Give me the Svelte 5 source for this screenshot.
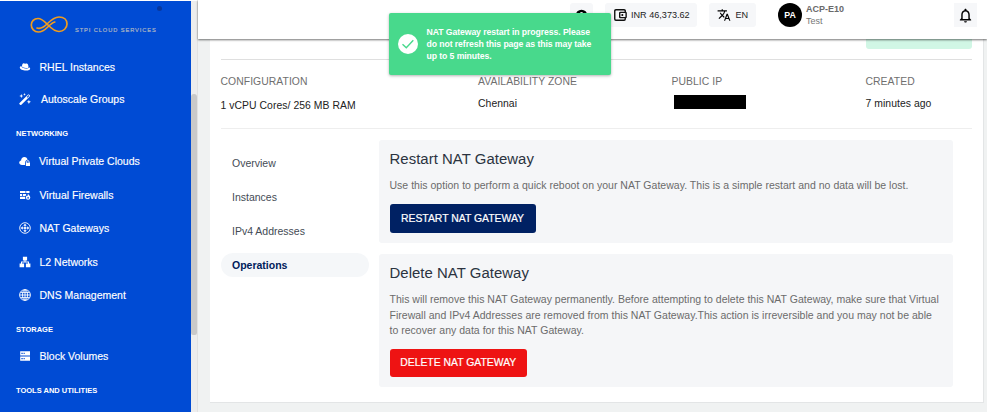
<script>
  const groups = [
    { title: '', items: [
      { label: 'RHEL Instances', icon: 'hat' },
      { label: 'Autoscale Groups', icon: 'wand' }
    ] },
    { title: 'NETWORKING', items: [
      { label: 'Virtual Private Clouds', icon: 'cloud' },
      { label: 'Virtual Firewalls', icon: 'wall' },
      { label: 'NAT Gateways', icon: 'nat' },
      { label: 'L2 Networks', icon: 'lan' },
      { label: 'DNS Management', icon: 'globe' }
    ] },
    { title: 'STORAGE', items: [{ label: 'Block Volumes', icon: 'disk' }] },
    { title: 'TOOLS AND UTILITIES', items: [] }
  ];
  const tabs = ['Overview', 'Instances', 'IPv4 Addresses', 'Operations'];
</script>

{#snippet glyph(name)}
  <svg class="ico {name}" viewBox="0 0 12 12" fill="currentColor">
    {#if name === 'hat'}
      <path d="M3 5.6C3 4 3.5 2.3 4.7 2.3c.6 0 .9.4 1.5.4s1-.3 1.7-.2c1.2.2 1.4 2 1.600 3.400 0 1-1.200 1.400-2.600 1.200C5 6.900 3.400 6.500 3 5.600z" />
      <path d="M2.500 5.300C1.500 5.400.8 5.700.8 6.500c0 1.600 3 3.100 6.300 3.100 2.400 0 4.100-.6 4.100-1.800 0-.7-.4-1.100-1.100-1.500-.4 1.200-1.900 1.500-3.500 1.300C4.600 7.400 2.700 6.700 2.500 5.300z" />
    {:else if name === 'wand'}
      <path d="M.6 10 8.900 1.700c.4-.4.9-.4 1.300 0l.5.5c.4.4.4.9 0 1.300L2.400 11.800c-.4.4-.9.4-1.300 0l-.5-.5c-.4-.4-.4-.9 0-1.300z" />
      <path d="M7.700 3.900 9.500 2.100l.8.8-1.800 1.800z" fill="#004bd4" />
      <path d="M2.300 1l.6 1.400 1.400.6-1.400.6-.6 1.400-.6-1.400L.3 3l1.400-.6zM5.500 0l.4 1 1 .4-1 .4-.4 1-.4-1-1-.4 1-.4zM9.900 6.700l.6 1.500 1.500.6-1.500.6-.6 1.500-.6-1.500-1.500-.6 1.500-.6z" />
    {:else if name === 'cloud'}
      <path d="M6.200 10H3C1.400 10 .2 9 .2 7.600c0-1.100.8-2 1.900-2.200.1-2 1.400-3.400 3.300-3.400 1.600 0 3 1.100 3.200 2.800-1.500.2-2.600 1.500-2.400 2.900-.2.500-.1 1.700 0 2.300z" />
      <path d="M6.900 7.700h.4v-.8a1.600 1.600 0 0 1 3.200 0v.8h.5v3.300H6.900zM8.100 7.700h1.600v-.8a.8.8 0 0 0-1.600 0z" fill-rule="evenodd" />
    {:else if name === 'wall'}
      <path d="M1 2h5.500v2.100H1zM7.200 2H10.500v2.100H7.200zM1 4.900h2.200V7H1zM4 4.900h3.300L6.600 7H4zM1 7.800h5.100l.2 2.100H1z" />
      <path d="M9 4.500c.3 1.500 2.300 2 2.300 4a2.200 2.200 0 0 1-4.400 0c0-1 .5-1.500 1-2 .2.500.4.600.6.700.3-.9.100-1.700.5-2.700zM9.100 7.800c-.500.500-.8.700-.8 1.100a.8.8 0 0 0 1.600 0c0-.4-.3-.6-.8-1.100z" fill-rule="evenodd" />
    {:else if name === 'nat'}
      <g fill="none" stroke="currentColor"><circle cx="6" cy="6" r="5.300" stroke-width=".9" />
      <path d="M6 2.600v6.800M2.600 6h6.800" stroke-width=".7" /></g>
      <path d="M6 1.700 7.700 3.800H4.300zM6 10.300 7.700 8.200H4.300zM1.700 6 3.800 4.300v3.400zM10.300 6 8.200 4.300v3.400z" />
      <circle cx="6" cy="6" r="1.100" />
    {:else if name === 'lan'}
      <path d="M3.900.8h4.200v3.700H6.500v1.100h3.500v2h1.400V11.300H6.900V7.600h2.100V6.500H3v1.100h2.100v3.700H.6V7.600H2v-2h3.500V4.500H3.900z" />
    {:else if name === 'globe'}
      <g fill="none" stroke="currentColor" stroke-width=".9"><circle cx="6" cy="6" r="5.400" /><ellipse cx="6" cy="6" rx="2.500" ry="5.300" /><path d="M6 .7v10.600M.7 6h10.600M1.500 3.400h9M1.500 8.600h9" /></g>
    {:else}
      <path d="M1.200 1.300h9.800v4.200H1.200zM2.400 2.800v1.300h1.300V2.800zM4.600 2.800v1.300h1.100V2.800zM1.200 6.500h9.800v4.200H1.200zM2.400 8v1.300h1.300V8zM4.600 8v1.300h1.100V8z" fill-rule="evenodd" />
    {/if}
  </svg>
{/snippet}

<div class="app">
  <aside>
    <div class="brand">
      <svg class="loop" viewBox="0 0 38 18" fill="none" stroke="#f09c1e" stroke-linecap="round">
        <path d="M7 12C10.500 13.200 14 11 17 8S24 1 29 1s8 3 8 7-3.500 7.500-8 7.500S21 12 18 9 12 2.500 8 2.500 1.300 5.500 1.300 9s3 7 7 7 7-2.500 9.500-5 4.500-4.500 7-5" stroke-width="1.700" />
      </svg>
      <span>STPI CLOUD SERVICES</span>
      <i class="spot"></i>
    </div>
    <nav>
      {#each groups as g}
        {#if g.title}<h4>{g.title}</h4>{/if}
        {#each g.items as item}
          <a class={item.icon}>{@render glyph(item.icon)}<span>{item.label}</span></a>
        {/each}
      {/each}
    </nav>
  </aside>
  <div class="track"><div class="thumb"></div></div>

  <main>
    <header>
      <div class="chip help"><svg viewBox="0 0 14 14"><circle cx="7" cy="7" r="6.300" /><circle cx="7" cy="5.100" r="1.900" fill="#f7f8fa" /></svg></div>
      <div class="chip wallet">
        <svg viewBox="0 0 24 24"><path d="M21 7.300V5a2 2 0 0 0-2-2H5a2 2 0 0 0-2 2v14a2 2 0 0 0 2 2h14a2 2 0 0 0 2-2v-2.300" fill="none" stroke="#111" stroke-width="2.400" /><rect x="11.500" y="7.500" width="11" height="9" rx="1" fill="none" stroke="#111" stroke-width="2.400" /><circle cx="16" cy="12" r="1.800" /></svg>
        <span>INR 46,373.62</span>
      </div>
      <div class="chip lang">
        <svg viewBox="0 0 24 24"><path d="M12.870 15.070l-2.540-2.510.03-.03A17.520 17.520 0 0 0 14.070 6H17V4h-7V2H8v2H1v1.990h11.170C11.500 7.920 10.440 9.750 9 11.350 8.070 10.320 7.300 9.190 6.690 8h-2c.73 1.630 1.730 3.170 2.980 4.560l-5.090 5.020L4 19l5-5 3.110 3.110.76-2.040zM18.500 10h-2L12 22h2l1.120-3h4.750L21 22h2l-4.500-12zm-2.620 7l1.620-4.330L19.120 17h-3.240z" /></svg>
        <span>EN</span>
      </div>
      <div class="avatar">PA</div>
      <div class="who"><b>ACP-E10</b><span>Test</span></div>
      <div class="bell"><svg viewBox="0 0 24 24"><path d="M12 22c1.100 0 2-.9 2-2h-4c0 1.100.9 2 2 2zm6-6v-5c0-3.070-1.630-5.640-4.500-6.320V4c0-.83-.67-1.500-1.500-1.500s-1.500.67-1.500 1.500v.68C7.640 5.360 6 7.920 6 11v5l-2 2v1h16v-1l-2-2zm-2 1H8v-6c0-2.480 1.510-4.500 4-4.500s4 2.020 4 4.500v6z" /></svg></div>
    </header>

    <section class="card">
      <div class="top"><div class="status"></div></div>
      <div class="facts">
        <div class="conf"><label>CONFIGURATION</label><p>1 vCPU Cores/ 256 MB RAM</p></div>
        <div><label>AVAILABILITY ZONE</label><p>Chennai</p></div>
        <div><label>PUBLIC IP</label><div class="redacted"></div></div>
        <div><label>CREATED</label><p>7 minutes ago</p></div>
      </div>
      <div class="body">
        <div class="tabs">
          {#each tabs as t}<div class="tab" class:active={t === 'Operations'}>{t}</div>{/each}
        </div>
        <div class="panels">
          <article class="restart">
            <h2>Restart NAT Gateway</h2>
            <p>Use this option to perform a quick reboot on your NAT Gateway. This is a simple restart and no data will be lost.</p>
            <button>RESTART NAT GATEWAY</button>
          </article>
          <article class="delete">
            <h2>Delete NAT Gateway</h2>
            <p>This will remove this NAT Gateway permanently. Before attempting to delete this NAT Gateway, make sure that Virtual<br />Firewall and IPv4 Addresses are removed from this NAT Gateway.This action is irreversible and you may not be able<br />to recover any data for this NAT Gateway.</p>
            <button>DELETE NAT GATEWAY</button>
          </article>
        </div>
      </div>
    </section>
  </main>

  <div class="toast">
    <svg viewBox="0 0 20 20"><circle cx="10" cy="10" r="10" fill="#fff" /><path d="M4.500 10.200 8.300 13.700 15.300 6.300" fill="none" stroke="#48d98c" stroke-width="1.400" /></svg>
    <p>NAT Gateway restart in progress. Please<br />do not refresh this page as this may take<br />up to 5 minutes.</p>
  </div>
</div>

<style>
  .app, .app * { box-sizing: border-box; }
  :global(body) { background: #fff; }
  .app { position: relative; display: flex; width: 987px; height: 412px; overflow: hidden; background: #f0f2f2; font-family: "Liberation Sans", Arial, sans-serif; font-size: 10.5px; }
  p, h2, h4 { margin: 0; }
  aside { width: 191px; border-top: 1px solid #fff; background: #004bd4; color: #fff; flex: none; }
  .brand { position: relative; height: 49.500px; padding: 15px 0 0 30px; display: flex; }
  .loop { width: 38px; height: 18px; flex: none; }
  .brand span { margin: 9px 0 0 7px; font-size: 5.700px; line-height: 11px; letter-spacing: .91px; color: #a9b3c4; white-space: nowrap; -webkit-text-stroke: .2px #a9b3c4; }
  .spot { position: absolute; left: 157px; top: 5px; width: 5px; height: 5px; border-radius: 50%; background: #08379d; }
  nav { display: flex; flex-direction: column; }
  nav a { display: flex; align-items: center; height: 33.500px; padding-left: 19px; -webkit-text-stroke: .15px #fff; }
  nav a span { margin-left: 8.500px; white-space: nowrap; }
  nav a.hat, nav a.wand { height: 32.500px; }
  nav a.wand span { margin-left: 10px; }
  nav a.cloud span { margin-left: 8px; }
  .ico { width: 12px; height: 12px; flex: none; }
  h4 { height: 27.500px; padding: 12px 0 0 16px; font-size: 7.500px; line-height: 12px; }
  a + h4 { flex: none; }
  nav a.wand + h4 { height: 29px; }
  .track { width: 7px; border-top: 1px solid #fff; flex: none; background: #ededed; border-right: 1px solid #e2e2e2; padding-top: 93px; }
  .thumb { width: 6px; height: 241px; background: #c9c9c9; border-radius: 3px 3px 2px 2px; }
  main { flex: 1; min-width: 0; }
  header { position: relative; z-index: 2; display: flex; height: 39px; padding-top: 3px; background: #fff; box-shadow: 0 1px 2px rgba(0,0,0,.55); }
  .chip { height: 24px; border-radius: 3px; background: #f6f7f9; display: flex; align-items: center; font-size: 9.100px; color: #222; white-space: nowrap; }
  .help { width: 23px; margin-left: 372px; justify-content: center; }
  .help svg { width: 13px; height: 13px; }
  .wallet { width: 92px; margin-left: 12px; padding-left: 8px; }
  .wallet svg { width: 14px; height: 14px; margin-right: 4px; }
  .lang { width: 47px; margin-left: 12px; padding-left: 8px; }
  .lang svg { width: 14px; height: 14px; margin-right: 4.500px; }
  .avatar { width: 24px; height: 24px; margin-left: 22px; border-radius: 50%; background: #000; color: #fff; font-size: 8.800px; font-weight: 700; line-height: 24px; text-align: center; }
  .who { margin-left: 4px; display: flex; flex-direction: column; font-size: 9px; line-height: 12px; color: #777; }
  .who b { color: #6a6a6a; }
  .bell { width: 23px; height: 24px; margin: 0 10px 0 auto; background: #f6f7f9; display: flex; align-items: center; justify-content: center; }
  .bell svg { width: 17px; height: 17px; }
  .card { width: 774px; height: 364px; margin: 0 0 0 11.500px; padding: 0 11px; background: #fff; border: solid #e3e5e6; border-width: 0 1px 1px 0; }
  .top { height: 21px; border-bottom: 1px solid #dfdfdf; display: flex; justify-content: flex-end; }
  .status { width: 106px; height: 10px; border-radius: 0 0 3px 3px; background: #d1f6e5; }
  .facts { display: grid; grid-template-columns: 257.500px 193.500px 194px 1fr; height: 69px; padding-top: 15px; border-bottom: 1px solid #eee; }
  label { display: block; font-size: 10.400px; line-height: 13px; letter-spacing: .05px; color: #6f6f6f; }
  .facts p { margin-top: 9px; line-height: 13px; font-size: 10.400px; letter-spacing: .05px; color: #222; }
  .facts .conf p { margin-top: 10.500px; }
  .redacted { width: 72px; height: 14px; margin: 7px 0 0 2px; background: #000; }
  .body { display: flex; padding-top: 11px; }
  .tabs { width: 148px; margin-right: 10.500px; padding-top: 10.500px; }
  .tab { height: 24px; margin-bottom: 10px; padding-left: 11.500px; line-height: 24px; color: #444b55; border-radius: 12px; font-size: 10.500px; }
  .tab.active { background: #f5f7f9; color: #00205b; font-weight: 700; }
  .panels { width: 573.500px; }
  article { padding: 0 10.500px; border-radius: 3px; background: #f5f6f8; }
  .restart { height: 103px; margin-bottom: 11px; }
  .delete { height: 133px; }
  h2 { padding-top: 10px; font-size: 14.900px; line-height: 19px; letter-spacing: .05px; font-weight: 400; color: #2b3340; }
  article p { margin-top: 9px; font-size: 10.500px; line-height: 15.600px; letter-spacing: .018px; color: #6b6b6b; white-space: nowrap; }
  button { display: block; height: 29px; margin-top: 10px; padding: 0; width: 146px; border: 0; border-radius: 3px; background: #002163; color: #fff; font: 10.400px "Liberation Sans", Arial, sans-serif; -webkit-text-stroke: .2px #fff; }
  .delete button { width: 137.500px; height: 28px; background: #ee1313; }
  .toast { position: absolute; z-index: 3; left: 389px; top: 13px; width: 221.500px; height: 62px; border-radius: 2px; background: #48d98c; box-shadow: 0 1px 3px rgba(0,0,0,.3); display: flex; align-items: center; padding-left: 9px; color: #fff; }
  .toast svg { width: 20px; height: 20px; flex: none; margin-right: 8.500px; }
  .toast p { font-size: 8.700px; letter-spacing: -.09px; font-weight: 700; line-height: 12px; white-space: nowrap; }
</style>
